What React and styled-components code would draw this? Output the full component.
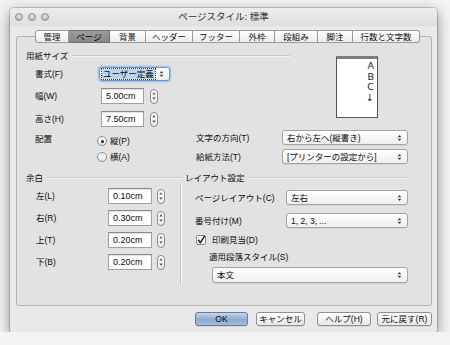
import React from 'react'
import styled, { createGlobalStyle, css } from 'styled-components'

const font = `"Liberation Sans", "Noto Sans CJK JP", sans-serif`

const GlobalStyle = createGlobalStyle`
  body {
    margin: 0;
    background: #f3f3f3;
    font-family: ${font};
  }
`

const Window = styled.div`
  width: 427px;
  height: 324px;
  margin: 8px 0 0 10px;
  box-sizing: border-box;
  display: flex;
  flex-direction: column;
  background: #e9e9e9;
  border-radius: 4px 4px 2px 2px;
  box-shadow: 0 4px 14px rgba(0, 0, 0, 0.45), 0 0 0 1px rgba(0, 0, 0, 0.15);
  font-size: 8.5px;
  line-height: 12px;
  color: #0c0c0c;
`
const TitleBar = styled.div`
  height: 18px;
  display: grid;
  grid-template-columns: 1fr auto 1fr;
  align-items: center;
  padding: 0 5px;
  background: linear-gradient(#ededed, #dedede);
  border-radius: 4px 4px 0 0;
`
const Lights = styled.div`
  display: flex;
  gap: 5px;
`
const Light = styled.div`
  width: 8px;
  height: 8px;
  border-radius: 50%;
  box-sizing: border-box;
  border: 1px solid #8f8f8f;
  background: radial-gradient(circle at 50% 35%, #e6e6e6, #a9a9a9);
`
const Title = styled.div`
  font-size: 9.5px;
  color: #333;
`
const Body = styled.div`
  display: flex;
  flex-direction: column;
  padding: 4px 5px 0 6px;
`
const TabBar = styled.div`
  display: flex;
  margin: 0 0 -7px 19px;
  position: relative;
  z-index: 1;
`
const Tab = styled.div`
  width: ${p => p.$w}px;
  height: 13px;
  box-sizing: border-box;
  display: flex;
  align-items: center;
  justify-content: center;
  border: 1px solid #9a9a9a;
  border-left-width: 0;
  background: linear-gradient(#ffffff, #ececec);
  color: #111;
  &:first-child {
    border-left-width: 1px;
    border-radius: 3px 0 0 3px;
  }
  &:last-child {
    border-radius: 0 3px 3px 0;
  }
  ${p => p.$active && css`
    background: linear-gradient(#9d9d9d, #858585);
    border-color: #6f6f6f;
    color: #000;
  `}
`
const Panel = styled.div`
  height: 270px;
  box-sizing: border-box;
  border: 1px solid #b4b4b4;
  border-radius: 3px;
  background: #e2e2e2;
  padding: 13px 10px 0 9px;
`
const SectionHead = styled.div`
  display: flex;
  align-items: center;
  height: 12px;
  width: ${p => p.$w}px;
`
const Rule = styled.div`
  flex: 1;
  margin-left: ${p => p.$gap || 4}px;
  border-top: 1px solid #cbcbcb;
  border-bottom: 1px solid #f4f4f4;
`
const TopRow = styled.div`
  display: flex;
  align-items: flex-start;
`
const PaperBlock = styled.div`
  width: 264px;
  display: flex;
  flex-direction: column;
`
const FieldRow = styled.div`
  display: flex;
  align-items: center;
  margin-top: ${p => p.$mt || 0}px;
`
const Label = styled.div`
  width: ${p => p.$w}px;
  padding-left: ${p => p.$indent || 0}px;
  padding-top: ${p => p.$top || 0}px;
  box-sizing: border-box;
  flex-shrink: 0;
  align-self: ${p => (p.$top ? 'flex-start' : 'auto')};
  white-space: nowrap;
`
const SelectBox = styled.div`
  width: ${p => p.$w}px;
  height: ${p => p.$h || 15}px;
  margin-left: ${p => p.$ml || 0}px;
  margin-top: ${p => p.$mt || 0}px;
  box-sizing: border-box;
  display: flex;
  align-items: center;
  justify-content: space-between;
  padding: 0 5px 0 4px;
  border: 1px solid #a3a3a3;
  border-radius: 3px;
  background: linear-gradient(#ffffff, #efefef);
  box-shadow: 0 1px 0 rgba(0, 0, 0, 0.06);
  white-space: nowrap;
  ${p => p.$focus && css`
    border-color: #6f93c4;
    box-shadow: 0 0 0 1.5px #a9c6ea;
    padding-left: 2px;
  `}
`
const Picked = styled.span`
  background: #b9d6f5;
  outline: 1px dotted #444;
  padding: 0 1px;
  line-height: 10px;
`
const Field = styled.div`
  width: ${p => p.$w}px;
  height: 16px;
  box-sizing: border-box;
  display: flex;
  align-items: center;
  padding-left: 4px;
  border: 1px solid #a0a0a0;
  border-top-color: #8a8a8a;
  background: #fff;
  box-shadow: inset 0 1px 1px rgba(0, 0, 0, 0.12);
  font-size: 9px;
`
const StepperBox = styled.div`
  width: 8px;
  height: 15px;
  margin-left: ${p => p.$gap}px;
  box-sizing: border-box;
  border: 1px solid #8c8c8c;
  border-radius: 4px;
  background: linear-gradient(#ffffff, #ececec);
  display: flex;
  align-items: center;
  justify-content: center;
`
const Preview = styled.div`
  width: 42px;
  height: 62px;
  margin: 6px 0 0 46px;
  box-sizing: border-box;
  border: 1px solid #555;
  border-top: 3px solid #7c7c7c;
  background: #fff;
  display: flex;
  flex-direction: column;
  align-items: flex-end;
  padding: 2px 3px 0 0;
  font-family: "DejaVu Sans", sans-serif;
  font-size: 9.5px;
  line-height: 10.5px;
  color: #222;
`
const OrientRow = styled.div`
  display: flex;
  margin-top: 3px;
`
const OrientLeft = styled.div`
  width: 170px;
  display: flex;
`
const RadioList = styled.div`
  display: flex;
  flex-direction: column;
  gap: 6px;
  padding-top: 6px;
`
const RadioItem = styled.div`
  display: flex;
  align-items: center;
  gap: 3px;
  height: 10px;
`
const Radio = styled.div`
  width: 10px;
  height: 10px;
  box-sizing: border-box;
  border-radius: 50%;
  border: 1px solid #8e8e8e;
  background: linear-gradient(#ffffff, #e4e4e4);
  display: flex;
  align-items: center;
  justify-content: center;
  &::after {
    content: '';
    width: 3px;
    height: 3px;
    border-radius: 50%;
    background: ${p => (p.$on ? '#222' : 'transparent')};
  }
`
const DirBlock = styled.div`
  display: flex;
  flex-direction: column;
  gap: 4px;
`
const LowerRow = styled.div`
  display: flex;
  margin-top: 8px;
`
const MarginCol = styled.div`
  width: 155px;
  display: flex;
  flex-direction: column;
`
const MarginRows = styled.div`
  height: 101px;
  box-sizing: border-box;
  padding-top: 4px;
  display: flex;
  flex-direction: column;
  gap: 6px;
  border-right: 1px solid #c6c6c6;
  box-shadow: 1px 0 0 #f4f4f4;
`
const LayoutCol = styled.div`
  display: flex;
  flex-direction: column;
  padding-left: 4px;
`
const CheckRow = styled.div`
  display: flex;
  align-items: center;
  gap: 6px;
  height: 12px;
  margin-top: 6px;
  padding-left: 11px;
`
const Indented = styled.div`
  margin-top: 5px;
  padding-left: 24px;
`
const ButtonRow = styled.div`
  display: flex;
  justify-content: flex-end;
  margin-top: 6px;
`
const Button = styled.div`
  width: ${p => p.$w}px;
  height: 14px;
  margin-left: ${p => p.$ml || 0}px;
  box-sizing: border-box;
  display: flex;
  align-items: center;
  justify-content: center;
  border: 1px solid #8f8f8f;
  border-radius: 3px;
  background: linear-gradient(#ffffff, #e7e7e7);
  box-shadow: 0 1px 0 rgba(0, 0, 0, 0.08);
  white-space: nowrap;
  ${p => p.$primary && css`
    border-color: #5d7eab;
    background: linear-gradient(#c9d6e8, #8ea9cc 55%, #a3bcda);
  `}
`

const Arrows = () => (
  <svg width="5" height="8" viewBox="0 0 5 8">
    <path d="M0.6 3.2 L2.5 1 L4.4 3.2Z M0.6 4.8 L2.5 7 L4.4 4.8Z" fill="#444" />
  </svg>
)

const Select = ({ w, h, ml, mt, focus, children }) => (
  <SelectBox $w={w} $h={h} $ml={ml} $mt={mt} $focus={focus}>
    <span>{children}</span>
    <Arrows />
  </SelectBox>
)

const Stepper = ({ gap }) => (
  <StepperBox $gap={gap}>
    <svg width="4" height="10" viewBox="0 0 4 10">
      <path d="M0.3 3.4 L2 1.2 L3.7 3.4Z M0.3 6.6 L2 8.8 L3.7 6.6Z" fill="#555" />
    </svg>
  </StepperBox>
)

const Checkbox = () => (
  <svg width="10" height="10" viewBox="0 0 10 10">
    <rect x="0.5" y="0.5" width="9" height="9" rx="1.5" fill="#fafafa" stroke="#8a8a8a" />
    <path d="M2.3 4.8 L4.3 7.6 L8.8 0.8" fill="none" stroke="#222" strokeWidth="1.5" />
  </svg>
)

const tabs = [
  ['管理', 34], ['ページ', 41], ['背景', 36], ['ヘッダー', 47], ['フッター', 47],
  ['外枠', 35], ['段組み', 43], ['脚注', 35], ['行数と文字数', 67],
]

const margins = [['左(L)', '0.10cm'], ['右(R)', '0.30cm'], ['上(T)', '0.20cm'], ['下(B)', '0.20cm']]

export default function App() {
  return (
    <>
      <GlobalStyle />
      <Window>
        <TitleBar>
          <Lights>
            <Light />
            <Light />
            <Light />
          </Lights>
          <Title>ページスタイル: 標準</Title>
          <div />
        </TitleBar>
        <Body>
          <TabBar>
            {tabs.map(([t, w]) => (
              <Tab key={t} $w={w} $active={t === 'ページ'}>{t}</Tab>
            ))}
          </TabBar>
          <Panel>
            <TopRow>
              <PaperBlock>
                <SectionHead $w={264}>
                  用紙サイズ
                  <Rule />
                </SectionHead>
                <FieldRow $mt={5}>
                  <Label $w={73} $indent={9}>書式(F)</Label>
                  <Select w={71} h={14} focus>
                    <Picked>ユーザー定義</Picked>
                  </Select>
                </FieldRow>
                <FieldRow $mt={7}>
                  <Label $w={75} $indent={9}>幅(W)</Label>
                  <Field $w={43}>5.00cm</Field>
                  <Stepper gap={6} />
                </FieldRow>
                <FieldRow $mt={7}>
                  <Label $w={75} $indent={9}>高さ(H)</Label>
                  <Field $w={43}>7.50cm</Field>
                  <Stepper gap={6} />
                </FieldRow>
              </PaperBlock>
              <Preview>
                <span>A</span>
                <span>B</span>
                <span>C</span>
                <span>↓</span>
              </Preview>
            </TopRow>

            <OrientRow>
              <OrientLeft>
                <Label $w={71} $indent={9} $top={3}>配置</Label>
                <RadioList>
                  <RadioItem>
                    <Radio $on />
                    縦(P)
                  </RadioItem>
                  <RadioItem>
                    <Radio />
                    横(A)
                  </RadioItem>
                </RadioList>
              </OrientLeft>
              <DirBlock>
                <FieldRow>
                  <Label $w={86}>文字の方向(T)</Label>
                  <Select w={126}>右から左へ(縦書き)</Select>
                </FieldRow>
                <FieldRow>
                  <Label $w={86}>給紙方法(T)</Label>
                  <Select w={126}>[プリンターの設定から]</Select>
                </FieldRow>
              </DirBlock>
            </OrientRow>

            <LowerRow>
              <MarginCol>
                <SectionHead $w={155}>
                  余白
                  <Rule $gap={3} />
                </SectionHead>
                <MarginRows>
                  {margins.map(([l, v]) => (
                    <FieldRow key={l}>
                      <Label $w={82} $indent={10}>{l}</Label>
                      <Field $w={44}>{v}</Field>
                      <Stepper gap={5} />
                    </FieldRow>
                  ))}
                </MarginRows>
              </MarginCol>
              <LayoutCol>
                <SectionHead $w={222}>
                  レイアウト設定
                  <Rule />
                </SectionHead>
                <FieldRow $mt={6}>
                  <Label $w={101} $indent={10}>ページレイアウト(C)</Label>
                  <Select w={122}>左右</Select>
                </FieldRow>
                <FieldRow $mt={8}>
                  <Label $w={101} $indent={10}>番号付け(M)</Label>
                  <Select w={122}>1, 2, 3, ...</Select>
                </FieldRow>
                <CheckRow>
                  <Checkbox />
                  印刷見当(D)
                </CheckRow>
                <Indented>適用段落スタイル(S)</Indented>
                <Select w={196} h={16} ml={27} mt={4}>本文</Select>
              </LayoutCol>
            </LowerRow>
          </Panel>
          <ButtonRow>
            <Button $w={53} $primary>OK</Button>
            <Button $w={49} $ml={8}>キャンセル</Button>
            <Button $w={54} $ml={12}>ヘルプ(H)</Button>
            <Button $w={55} $ml={6}>元に戻す(R)</Button>
          </ButtonRow>
        </Body>
      </Window>
    </>
  )
}
